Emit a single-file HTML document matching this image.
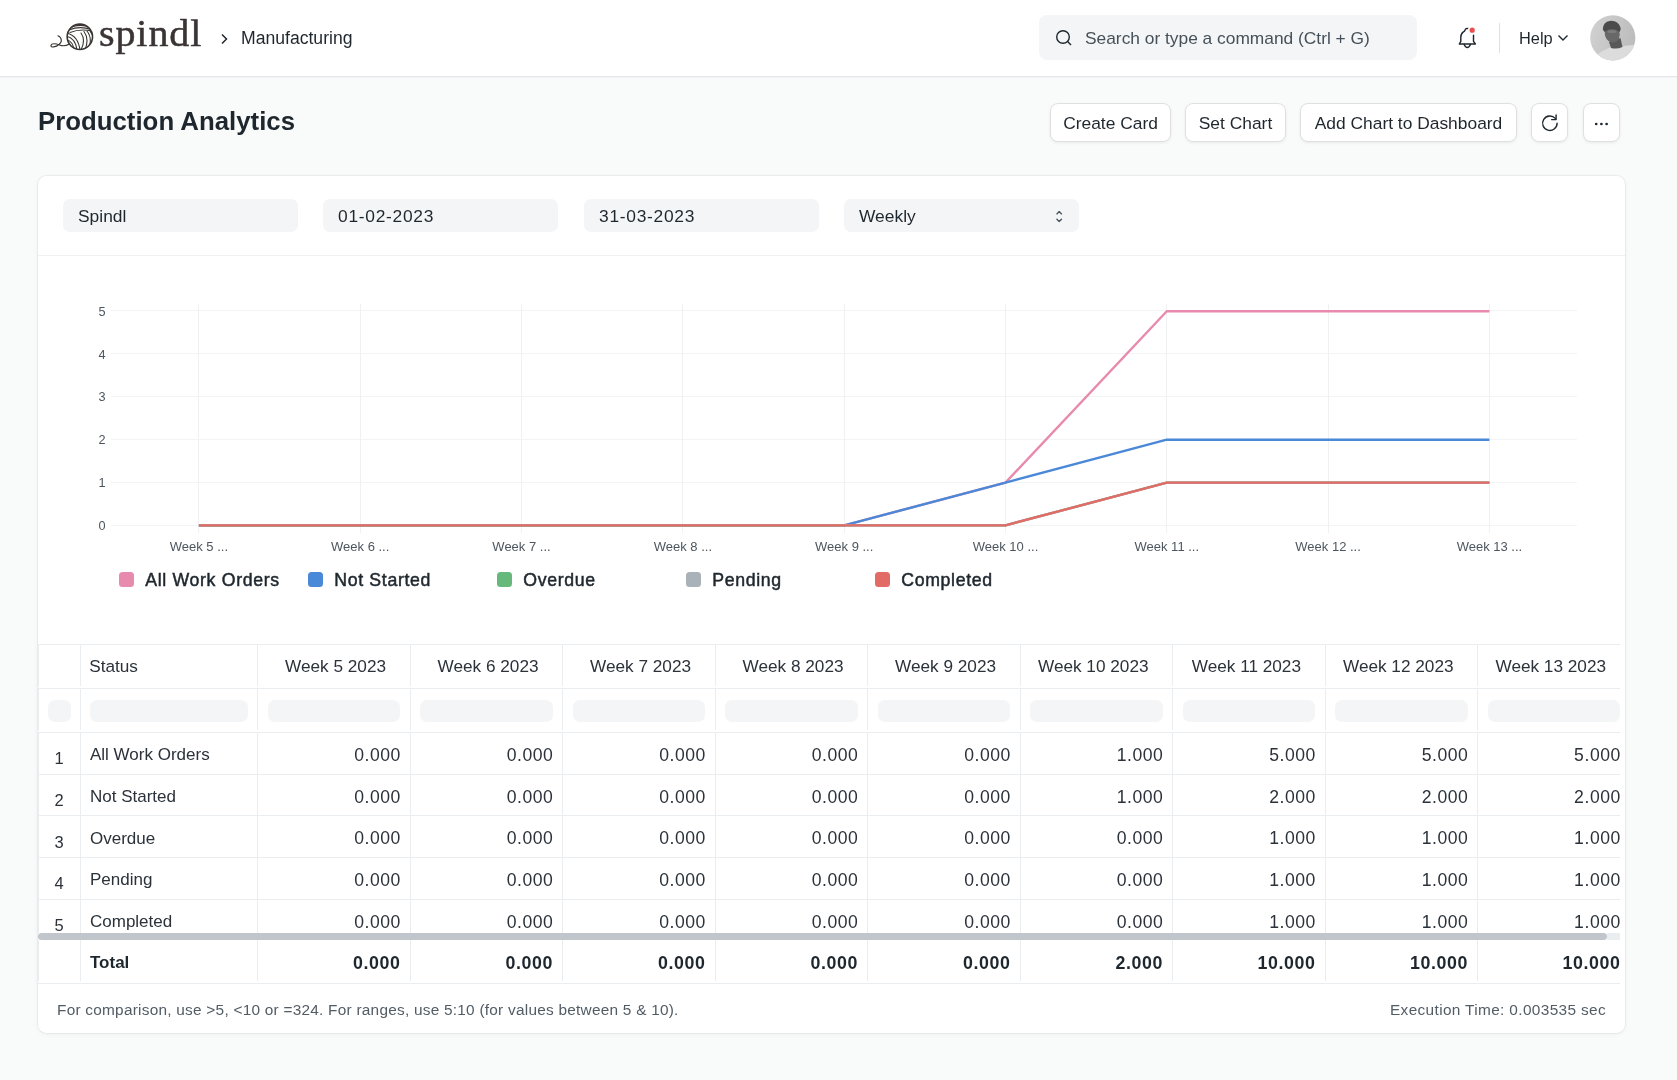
<!DOCTYPE html>
<html><head><meta charset="utf-8">
<style>
*{box-sizing:border-box;margin:0;padding:0}
html,body{width:1677px;height:1080px;overflow:hidden}
body{will-change:transform}
body{background:#f9fafa;font-family:"Liberation Sans",sans-serif;color:#1f272e;position:relative}
.abs{position:absolute}
#nav{left:0;top:0;width:1677px;height:77px;background:#fff;border-bottom:1px solid #e5e7ea;box-shadow:0 1px 0 #f2f3f5}
.t{position:absolute;white-space:nowrap;line-height:1}
.btn{position:absolute;top:103px;height:39px;background:#fff;border:1px solid #e0e0e0;border-radius:8px;box-shadow:0 1px 3px rgba(0,0,0,.07);font-size:17.4px;color:#1f272e}
.btn span{position:absolute;left:0;right:0;text-align:center;top:11px;line-height:1}
#card{left:38px;top:176px;width:1587px;height:857px;background:#fff;border-radius:8.5px;box-shadow:0 0 0 1px rgba(30,40,50,.055),0 1px 5px rgba(0,0,0,.05)}
.inp{position:absolute;top:199px;width:235px;height:33px;background:#f4f5f6;border-radius:7px;font-size:17.4px;color:#1f272e}
.inp span{position:absolute;left:15px;top:9px;line-height:1}
.leg{font-size:17.7px;color:#1f272e;-webkit-text-stroke:.5px #1f272e;letter-spacing:.68px}
.hb{height:1px;background:#ebeef0}
.vb{width:1px;background:#ebeef0}
.th{font-size:17.2px;color:#2b323a}
.pill{height:22.5px;background:#f4f5f6;border-radius:7px}
.td{font-size:17px;color:#2b323a}
.num{letter-spacing:.55px;font-size:17.6px}
.idx{font-size:16.5px;color:#2b323a}
.tot{font-size:17px;font-weight:bold;color:#1f272e}
.tot.num{font-size:17.8px;letter-spacing:.6px}
.foot{font-size:15.4px;letter-spacing:.24px;color:#525c65}
</style></head>
<body>
<div id="nav" class="abs">
  <!-- logo -->
  <svg class="abs" style="left:48px;top:18px" width="50" height="36" viewBox="48 18 50 36">
    <defs><clipPath id="ballc"><circle cx="79.85" cy="36.8" r="12.6"/></clipPath></defs>
    <g fill="none" stroke="#3b3434" stroke-linecap="round">
      <circle cx="79.85" cy="36.8" r="12.7" stroke-width="1.6"/>
      <g clip-path="url(#ballc)" stroke-width="1.1">
        <path d="M70 27.5 Q80 23.5 90 27"/>
        <path d="M69 30 Q80 25.5 91 29.5"/>
        <path d="M70 32.5 Q80 28.5 92 31"/>
        <path d="M81 33 Q86 40 81 50"/>
        <path d="M84 31.5 Q89.5 39 85 50"/>
        <path d="M87 31 Q92.5 38 89 48"/>
        <path d="M90 31 Q95 37 92 45"/>
        <path d="M66 33 Q78 35 80 50"/>
        <path d="M66 36 Q75.5 38 77 50"/>
        <path d="M66 39.5 Q73 41 74 50"/>
        <path d="M66 43 Q70.5 44.5 71 50"/>
      </g>
      <path d="M58 35.7 C62 37.5 62.5 42 59 44.5 C56 47 50.5 48 51 45.5 C51.5 43 56 43.5 59.5 45 C62 46 66 46 69 44.3" stroke-width="1.1"/>
    </g>
  </svg>
  <div class="t" style="left:99px;top:15px;font-family:'Liberation Serif',serif;font-size:40px;letter-spacing:.9px;color:#3b3434;-webkit-text-stroke:.5px #3b3434;transform:scaleY(.93);transform-origin:0 0">spindl</div>
  <svg class="abs" style="left:219px;top:33px" width="10" height="12" viewBox="0 0 10 12"><path d="M3 1.5 L7.5 6 L3 10.5" fill="none" stroke="#1f272e" stroke-width="1.5"/></svg>
  <div class="t" style="left:241px;top:30px;font-size:17.6px;color:#1f272e">Manufacturing</div>
  <!-- search -->
  <div class="abs" style="left:1039px;top:15px;width:378px;height:45px;background:#f4f5f6;border-radius:8px"></div>
  <svg class="abs" style="left:1055px;top:29px" width="18" height="18" viewBox="0 0 18 18"><circle cx="8" cy="8" r="6.3" fill="none" stroke="#1f272e" stroke-width="1.4"/><path d="M12.6 12.6 L16 16" stroke="#1f272e" stroke-width="1.4"/></svg>
  <div class="t" style="left:1085px;top:30px;font-size:17.35px;color:#465059">Search or type a command (Ctrl + G)</div>
  <!-- bell -->
  <svg class="abs" style="left:1452px;top:22px" width="30" height="30" viewBox="1452 22 30 30">
    <g fill="none" stroke="#1f272e" stroke-width="1.45" stroke-linecap="round" stroke-linejoin="round">
      <path d="M1467.6 28.4 L1466.9 28.4 Q1465.6 28.5 1465.1 29.9 Q1464.6 31.3 1463.4 31.8 Q1460.9 33.4 1460.8 37.2 L1460.8 41.4 L1459.3 44 L1475.4 44 L1473.5 41.4 L1473.5 35.2"/>
      <path d="M1464.2 44.4 Q1465.4 47.4 1467.3 47.4 Q1469.2 47.4 1470.4 44.4"/>
    </g>
    <circle cx="1472.2" cy="30.2" r="2.6" fill="#e8524e"/>
  </svg>
  <div class="abs" style="left:1499px;top:23px;width:1px;height:30px;background:#dce0e3"></div>
  <div class="t" style="left:1519px;top:30px;font-size:16.4px;color:#1f272e">Help</div>
  <svg class="abs" style="left:1557px;top:33px" width="12" height="9" viewBox="0 0 12 9"><path d="M1.5 2.5 L6 7 L10.5 2.5" fill="none" stroke="#1f272e" stroke-width="1.4"/></svg>
  <!-- avatar -->
  <svg class="abs" style="left:1590px;top:15px" width="46" height="46" viewBox="0 0 46 46">
    <defs>
      <clipPath id="avc"><circle cx="22.8" cy="22.8" r="22.6"/></clipPath>
      <linearGradient id="avg" x1="0" y1="0" x2="1" y2="0.3"><stop offset="0" stop-color="#d2d2d2"/><stop offset="1" stop-color="#bdbdbd"/></linearGradient>
      <filter id="avb" x="-10%" y="-10%" width="120%" height="120%"><feGaussianBlur stdDeviation="0.6"/></filter>
    </defs>
    <g clip-path="url(#avc)">
      <rect width="46" height="46" fill="url(#avg)"/>
      <g filter="url(#avb)">
        <path d="M5 41 Q12 35.5 20 32.5 L27 33 Q36 29.5 46 30 L48 48 L4 48 Z" fill="#dcdcdc"/>
        <path d="M19 27 L30.5 23 L32.5 32 Q27 34.5 21 33 Z" fill="#595959"/>
        <ellipse cx="22.3" cy="19" rx="7.4" ry="8.6" transform="rotate(-15 22.3 19)" fill="#676767"/>
        <path d="M12.8 14.5 Q13 6.5 21 5.8 Q29 6 30.8 13.5 L29.8 17 Q22 11 14.5 17 Z" fill="#4b4b4b"/>
        <ellipse cx="22" cy="16.5" rx="4.5" ry="1.6" fill="#8c8c8c" opacity=".55"/>
      </g>
    </g>
  </svg>
</div>

<div class="t" style="left:38px;top:108.5px;font-size:25.8px;font-weight:bold;color:#1f272e">Production Analytics</div>
<div class="btn" style="left:1050px;width:121px"><span>Create Card</span></div>
<div class="btn" style="left:1185px;width:101px"><span>Set Chart</span></div>
<div class="btn" style="left:1300px;width:217px"><span>Add Chart to Dashboard</span></div>
<div class="btn" style="left:1531px;width:37px"></div>
<svg class="abs" style="left:1540px;top:113px" width="20" height="20" viewBox="1540 113 20 20"><path d="M1557.1 123.2 A7.25 7.25 0 1 1 1555.3 118.4" fill="none" stroke="#1f272e" stroke-width="1.4" stroke-linecap="round"/><path d="M1551.6 119.6 L1556.1 119.6 L1556.1 115" fill="none" stroke="#1f272e" stroke-width="1.4" stroke-linecap="round" stroke-linejoin="round"/></svg>
<div class="btn" style="left:1583px;width:37px"></div>
<svg class="abs" style="left:1590px;top:118px" width="24" height="12" viewBox="1590 118 24 12"><circle cx="1596.2" cy="124" r="1.35" fill="#1f272e"/><circle cx="1601.4" cy="124" r="1.35" fill="#1f272e"/><circle cx="1606.6" cy="124" r="1.35" fill="#1f272e"/></svg>

<div id="card" class="abs"></div>
<div class="inp" style="left:63px"><span>Spindl</span></div>
<div class="inp" style="left:323px"><span style="letter-spacing:.72px">01-02-2023</span></div>
<div class="inp" style="left:584px"><span style="letter-spacing:.72px">31-03-2023</span></div>
<div class="inp" style="left:844px"><span>Weekly</span></div>
<svg class="abs" style="left:1054px;top:209px" width="10" height="16" viewBox="1054 209 10 16"><path d="M1056.9 213.9 L1059.2 211.6 L1061.5 213.9 M1056.9 219.3 L1059.2 221.6 L1061.5 219.3" fill="none" stroke="#4a545e" stroke-width="1.35" stroke-linecap="round" stroke-linejoin="round"/></svg>
<div class="abs" style="left:38px;top:255px;width:1587px;height:1px;background:#eef0f2"></div>

<!--CHART-->
<svg class="abs" style="left:0;top:0" width="1677" height="620" viewBox="0 0 1677 620">
<g stroke="#f0f1f3" stroke-width="1" shape-rendering="crispEdges">
<line x1="111" y1="525.00" x2="1577" y2="525.00" stroke="#f3f4f5"/>
<line x1="111" y1="482.17" x2="1577" y2="482.17" stroke="#f3f4f5"/>
<line x1="111" y1="439.34" x2="1577" y2="439.34" stroke="#f3f4f5"/>
<line x1="111" y1="396.51" x2="1577" y2="396.51" stroke="#f3f4f5"/>
<line x1="111" y1="353.68" x2="1577" y2="353.68" stroke="#f3f4f5"/>
<line x1="111" y1="310.85" x2="1577" y2="310.85" stroke="#f3f4f5"/>
<line x1="198.95" y1="304" x2="198.95" y2="533"/>
<line x1="360.25" y1="304" x2="360.25" y2="533"/>
<line x1="521.55" y1="304" x2="521.55" y2="533"/>
<line x1="682.85" y1="304" x2="682.85" y2="533"/>
<line x1="844.15" y1="304" x2="844.15" y2="533"/>
<line x1="1005.45" y1="304" x2="1005.45" y2="533"/>
<line x1="1166.75" y1="304" x2="1166.75" y2="533"/>
<line x1="1328.05" y1="304" x2="1328.05" y2="533"/>
<line x1="1489.35" y1="304" x2="1489.35" y2="533"/>
</g>
<g font-family="Liberation Sans" font-size="12.7" fill="#4d565f" text-anchor="end">
<text x="105.5" y="529.9">0</text>
<text x="105.5" y="487.1">1</text>
<text x="105.5" y="444.2">2</text>
<text x="105.5" y="401.4">3</text>
<text x="105.5" y="358.6">4</text>
<text x="105.5" y="315.8">5</text>
</g>
<g font-family="Liberation Sans" font-size="13" fill="#4d565f" text-anchor="middle">
<text x="198.9" y="550.6">Week 5 ...</text>
<text x="360.2" y="550.6">Week 6 ...</text>
<text x="521.5" y="550.6">Week 7 ...</text>
<text x="682.9" y="550.6">Week 8 ...</text>
<text x="844.2" y="550.6">Week 9 ...</text>
<text x="1005.5" y="550.6">Week 10 ...</text>
<text x="1166.8" y="550.6">Week 11 ...</text>
<text x="1328.1" y="550.6">Week 12 ...</text>
<text x="1489.4" y="550.6">Week 13 ...</text>
</g>
<polyline points="198.9,525.4 360.2,525.4 521.5,525.4 682.9,525.4 844.2,525.4 1005.5,482.6 1166.8,311.2 1328.1,311.2 1489.4,311.2" fill="none" stroke="#e88aad" stroke-width="2.4" stroke-linejoin="round"/>
<polyline points="198.9,525.4 360.2,525.4 521.5,525.4 682.9,525.4 844.2,525.4 1005.5,482.6 1166.8,439.7 1328.1,439.7 1489.4,439.7" fill="none" stroke="#4a88d8" stroke-width="2.4" stroke-linejoin="round"/>
<polyline points="198.9,525.4 360.2,525.4 521.5,525.4 682.9,525.4 844.2,525.4 1005.5,525.4 1166.8,482.6 1328.1,482.6 1489.4,482.6" fill="none" stroke="#66b97b" stroke-width="2.4" stroke-linejoin="round"/>
<polyline points="198.9,525.4 360.2,525.4 521.5,525.4 682.9,525.4 844.2,525.4 1005.5,525.4 1166.8,482.6 1328.1,482.6 1489.4,482.6" fill="none" stroke="#a9b1b9" stroke-width="2.4" stroke-linejoin="round"/>
<polyline points="198.9,525.4 360.2,525.4 521.5,525.4 682.9,525.4 844.2,525.4 1005.5,525.4 1166.8,482.6 1328.1,482.6 1489.4,482.6" fill="none" stroke="#e36b66" stroke-width="2.4" stroke-linejoin="round"/>
</svg>
<div class="abs" style="left:118.6px;top:572px;width:15px;height:15px;border-radius:3.5px;background:#e88aad"></div>
<div class="t leg" style="left:145.2px;top:572px">All Work Orders</div>
<div class="abs" style="left:307.6px;top:572px;width:15px;height:15px;border-radius:3.5px;background:#4a88d8"></div>
<div class="t leg" style="left:334.2px;top:572px">Not Started</div>
<div class="abs" style="left:496.6px;top:572px;width:15px;height:15px;border-radius:3.5px;background:#66b97b"></div>
<div class="t leg" style="left:523.2px;top:572px">Overdue</div>
<div class="abs" style="left:685.6px;top:572px;width:15px;height:15px;border-radius:3.5px;background:#a9b1b9"></div>
<div class="t leg" style="left:712.2px;top:572px">Pending</div>
<div class="abs" style="left:874.6px;top:572px;width:15px;height:15px;border-radius:3.5px;background:#e36b66"></div>
<div class="t leg" style="left:901.2px;top:572px">Completed</div>
<!--/CHART-->
<!--TABLE-->
<div class="abs" style="left:38px;top:644px;width:1581.5px;height:340px;overflow:hidden">
<div class="abs hb" style="left:0;top:0.0px;width:1600px"></div>
<div class="abs hb" style="left:0;top:43.8px;width:1600px"></div>
<div class="abs hb" style="left:0;top:88.0px;width:1600px"></div>
<div class="abs hb" style="left:0;top:129.7px;width:1600px"></div>
<div class="abs hb" style="left:0;top:171.4px;width:1600px"></div>
<div class="abs hb" style="left:0;top:213.1px;width:1600px"></div>
<div class="abs hb" style="left:0;top:254.8px;width:1600px"></div>
<div class="abs hb" style="left:0;top:338.8px;width:1600px"></div>
<div class="abs vb" style="left:0.0px;top:0.5px;height:41.0px"></div>
<div class="abs vb" style="left:41.5px;top:0.5px;height:41.0px"></div>
<div class="abs vb" style="left:219.0px;top:0.5px;height:41.0px"></div>
<div class="abs vb" style="left:371.5px;top:0.5px;height:41.0px"></div>
<div class="abs vb" style="left:524.0px;top:0.5px;height:41.0px"></div>
<div class="abs vb" style="left:676.5px;top:0.5px;height:41.0px"></div>
<div class="abs vb" style="left:829.0px;top:0.5px;height:41.0px"></div>
<div class="abs vb" style="left:981.5px;top:0.5px;height:41.0px"></div>
<div class="abs vb" style="left:1134.0px;top:0.5px;height:41.0px"></div>
<div class="abs vb" style="left:1286.5px;top:0.5px;height:41.0px"></div>
<div class="abs vb" style="left:1439.0px;top:0.5px;height:41.0px"></div>
<div class="abs vb" style="left:1591.5px;top:0.5px;height:41.0px"></div>
<div class="abs vb" style="left:0.0px;top:44.5px;height:41.0px"></div>
<div class="abs vb" style="left:41.5px;top:44.5px;height:41.0px"></div>
<div class="abs vb" style="left:219.0px;top:44.5px;height:41.0px"></div>
<div class="abs vb" style="left:371.5px;top:44.5px;height:41.0px"></div>
<div class="abs vb" style="left:524.0px;top:44.5px;height:41.0px"></div>
<div class="abs vb" style="left:676.5px;top:44.5px;height:41.0px"></div>
<div class="abs vb" style="left:829.0px;top:44.5px;height:41.0px"></div>
<div class="abs vb" style="left:981.5px;top:44.5px;height:41.0px"></div>
<div class="abs vb" style="left:1134.0px;top:44.5px;height:41.0px"></div>
<div class="abs vb" style="left:1286.5px;top:44.5px;height:41.0px"></div>
<div class="abs vb" style="left:1439.0px;top:44.5px;height:41.0px"></div>
<div class="abs vb" style="left:1591.5px;top:44.5px;height:41.0px"></div>
<div class="abs vb" style="left:0.0px;top:88.5px;height:41.7px"></div>
<div class="abs vb" style="left:41.5px;top:88.5px;height:41.7px"></div>
<div class="abs vb" style="left:219.0px;top:88.5px;height:41.7px"></div>
<div class="abs vb" style="left:371.5px;top:88.5px;height:41.7px"></div>
<div class="abs vb" style="left:524.0px;top:88.5px;height:41.7px"></div>
<div class="abs vb" style="left:676.5px;top:88.5px;height:41.7px"></div>
<div class="abs vb" style="left:829.0px;top:88.5px;height:41.7px"></div>
<div class="abs vb" style="left:981.5px;top:88.5px;height:41.7px"></div>
<div class="abs vb" style="left:1134.0px;top:88.5px;height:41.7px"></div>
<div class="abs vb" style="left:1286.5px;top:88.5px;height:41.7px"></div>
<div class="abs vb" style="left:1439.0px;top:88.5px;height:41.7px"></div>
<div class="abs vb" style="left:1591.5px;top:88.5px;height:41.7px"></div>
<div class="abs vb" style="left:0.0px;top:130.2px;height:41.7px"></div>
<div class="abs vb" style="left:41.5px;top:130.2px;height:41.7px"></div>
<div class="abs vb" style="left:219.0px;top:130.2px;height:41.7px"></div>
<div class="abs vb" style="left:371.5px;top:130.2px;height:41.7px"></div>
<div class="abs vb" style="left:524.0px;top:130.2px;height:41.7px"></div>
<div class="abs vb" style="left:676.5px;top:130.2px;height:41.7px"></div>
<div class="abs vb" style="left:829.0px;top:130.2px;height:41.7px"></div>
<div class="abs vb" style="left:981.5px;top:130.2px;height:41.7px"></div>
<div class="abs vb" style="left:1134.0px;top:130.2px;height:41.7px"></div>
<div class="abs vb" style="left:1286.5px;top:130.2px;height:41.7px"></div>
<div class="abs vb" style="left:1439.0px;top:130.2px;height:41.7px"></div>
<div class="abs vb" style="left:1591.5px;top:130.2px;height:41.7px"></div>
<div class="abs vb" style="left:0.0px;top:171.9px;height:41.7px"></div>
<div class="abs vb" style="left:41.5px;top:171.9px;height:41.7px"></div>
<div class="abs vb" style="left:219.0px;top:171.9px;height:41.7px"></div>
<div class="abs vb" style="left:371.5px;top:171.9px;height:41.7px"></div>
<div class="abs vb" style="left:524.0px;top:171.9px;height:41.7px"></div>
<div class="abs vb" style="left:676.5px;top:171.9px;height:41.7px"></div>
<div class="abs vb" style="left:829.0px;top:171.9px;height:41.7px"></div>
<div class="abs vb" style="left:981.5px;top:171.9px;height:41.7px"></div>
<div class="abs vb" style="left:1134.0px;top:171.9px;height:41.7px"></div>
<div class="abs vb" style="left:1286.5px;top:171.9px;height:41.7px"></div>
<div class="abs vb" style="left:1439.0px;top:171.9px;height:41.7px"></div>
<div class="abs vb" style="left:1591.5px;top:171.9px;height:41.7px"></div>
<div class="abs vb" style="left:0.0px;top:213.6px;height:41.7px"></div>
<div class="abs vb" style="left:41.5px;top:213.6px;height:41.7px"></div>
<div class="abs vb" style="left:219.0px;top:213.6px;height:41.7px"></div>
<div class="abs vb" style="left:371.5px;top:213.6px;height:41.7px"></div>
<div class="abs vb" style="left:524.0px;top:213.6px;height:41.7px"></div>
<div class="abs vb" style="left:676.5px;top:213.6px;height:41.7px"></div>
<div class="abs vb" style="left:829.0px;top:213.6px;height:41.7px"></div>
<div class="abs vb" style="left:981.5px;top:213.6px;height:41.7px"></div>
<div class="abs vb" style="left:1134.0px;top:213.6px;height:41.7px"></div>
<div class="abs vb" style="left:1286.5px;top:213.6px;height:41.7px"></div>
<div class="abs vb" style="left:1439.0px;top:213.6px;height:41.7px"></div>
<div class="abs vb" style="left:1591.5px;top:213.6px;height:41.7px"></div>
<div class="abs vb" style="left:0.0px;top:255.3px;height:33.7px"></div>
<div class="abs vb" style="left:41.5px;top:255.3px;height:33.7px"></div>
<div class="abs vb" style="left:219.0px;top:255.3px;height:33.7px"></div>
<div class="abs vb" style="left:371.5px;top:255.3px;height:33.7px"></div>
<div class="abs vb" style="left:524.0px;top:255.3px;height:33.7px"></div>
<div class="abs vb" style="left:676.5px;top:255.3px;height:33.7px"></div>
<div class="abs vb" style="left:829.0px;top:255.3px;height:33.7px"></div>
<div class="abs vb" style="left:981.5px;top:255.3px;height:33.7px"></div>
<div class="abs vb" style="left:1134.0px;top:255.3px;height:33.7px"></div>
<div class="abs vb" style="left:1286.5px;top:255.3px;height:33.7px"></div>
<div class="abs vb" style="left:1439.0px;top:255.3px;height:33.7px"></div>
<div class="abs vb" style="left:1591.5px;top:255.3px;height:33.7px"></div>
<div class="abs vb" style="left:0.0px;top:296.0px;height:41.0px"></div>
<div class="abs vb" style="left:41.5px;top:296.0px;height:41.0px"></div>
<div class="abs vb" style="left:219.0px;top:296.0px;height:41.0px"></div>
<div class="abs vb" style="left:371.5px;top:296.0px;height:41.0px"></div>
<div class="abs vb" style="left:524.0px;top:296.0px;height:41.0px"></div>
<div class="abs vb" style="left:676.5px;top:296.0px;height:41.0px"></div>
<div class="abs vb" style="left:829.0px;top:296.0px;height:41.0px"></div>
<div class="abs vb" style="left:981.5px;top:296.0px;height:41.0px"></div>
<div class="abs vb" style="left:1134.0px;top:296.0px;height:41.0px"></div>
<div class="abs vb" style="left:1286.5px;top:296.0px;height:41.0px"></div>
<div class="abs vb" style="left:1439.0px;top:296.0px;height:41.0px"></div>
<div class="abs vb" style="left:1591.5px;top:296.0px;height:41.0px"></div>
<div class="t th" style="left:51.2px;top:13.7px">Status</div>
<div class="t th" style="right:1233.5px;top:13.7px">Week 5 2023</div>
<div class="t th" style="right:1081.0px;top:13.7px">Week 6 2023</div>
<div class="t th" style="right:928.5px;top:13.7px">Week 7 2023</div>
<div class="t th" style="right:776.0px;top:13.7px">Week 8 2023</div>
<div class="t th" style="right:623.5px;top:13.7px">Week 9 2023</div>
<div class="t th" style="right:471.0px;top:13.7px">Week 10 2023</div>
<div class="t th" style="right:318.5px;top:13.7px">Week 11 2023</div>
<div class="t th" style="right:166.0px;top:13.7px">Week 12 2023</div>
<div class="t th" style="right:13.5px;top:13.7px">Week 13 2023</div>
<div class="abs pill" style="left:10.0px;top:55.5px;width:22.5px"></div>
<div class="abs pill" style="left:52.0px;top:55.5px;width:157.5px"></div>
<div class="abs pill" style="left:229.5px;top:55.5px;width:132.5px"></div>
<div class="abs pill" style="left:382.0px;top:55.5px;width:132.5px"></div>
<div class="abs pill" style="left:534.5px;top:55.5px;width:132.5px"></div>
<div class="abs pill" style="left:687.0px;top:55.5px;width:132.5px"></div>
<div class="abs pill" style="left:839.5px;top:55.5px;width:132.5px"></div>
<div class="abs pill" style="left:992.0px;top:55.5px;width:132.5px"></div>
<div class="abs pill" style="left:1144.5px;top:55.5px;width:132.5px"></div>
<div class="abs pill" style="left:1297.0px;top:55.5px;width:132.5px"></div>
<div class="abs pill" style="left:1449.5px;top:55.5px;width:132.5px"></div>
<div class="abs pill" style="left:1602.0px;top:55.5px;width:132.5px"></div>
<div class="t idx" style="left:0;width:42px;text-align:center;top:106.3px">1</div>
<div class="t td" style="left:52.0px;top:102.3px">All Work Orders</div>
<div class="t td num" style="right:1218.6px;top:103.0px">0.000</div>
<div class="t td num" style="right:1066.1px;top:103.0px">0.000</div>
<div class="t td num" style="right:913.6px;top:103.0px">0.000</div>
<div class="t td num" style="right:761.1px;top:103.0px">0.000</div>
<div class="t td num" style="right:608.6px;top:103.0px">0.000</div>
<div class="t td num" style="right:456.1px;top:103.0px">1.000</div>
<div class="t td num" style="right:303.6px;top:103.0px">5.000</div>
<div class="t td num" style="right:151.1px;top:103.0px">5.000</div>
<div class="t td num" style="right:-1.4px;top:103.0px">5.000</div>
<div class="t idx" style="left:0;width:42px;text-align:center;top:148.0px">2</div>
<div class="t td" style="left:52.0px;top:144.0px">Not Started</div>
<div class="t td num" style="right:1218.6px;top:144.7px">0.000</div>
<div class="t td num" style="right:1066.1px;top:144.7px">0.000</div>
<div class="t td num" style="right:913.6px;top:144.7px">0.000</div>
<div class="t td num" style="right:761.1px;top:144.7px">0.000</div>
<div class="t td num" style="right:608.6px;top:144.7px">0.000</div>
<div class="t td num" style="right:456.1px;top:144.7px">1.000</div>
<div class="t td num" style="right:303.6px;top:144.7px">2.000</div>
<div class="t td num" style="right:151.1px;top:144.7px">2.000</div>
<div class="t td num" style="right:-1.4px;top:144.7px">2.000</div>
<div class="t idx" style="left:0;width:42px;text-align:center;top:189.7px">3</div>
<div class="t td" style="left:52.0px;top:185.7px">Overdue</div>
<div class="t td num" style="right:1218.6px;top:186.4px">0.000</div>
<div class="t td num" style="right:1066.1px;top:186.4px">0.000</div>
<div class="t td num" style="right:913.6px;top:186.4px">0.000</div>
<div class="t td num" style="right:761.1px;top:186.4px">0.000</div>
<div class="t td num" style="right:608.6px;top:186.4px">0.000</div>
<div class="t td num" style="right:456.1px;top:186.4px">0.000</div>
<div class="t td num" style="right:303.6px;top:186.4px">1.000</div>
<div class="t td num" style="right:151.1px;top:186.4px">1.000</div>
<div class="t td num" style="right:-1.4px;top:186.4px">1.000</div>
<div class="t idx" style="left:0;width:42px;text-align:center;top:231.4px">4</div>
<div class="t td" style="left:52.0px;top:227.4px">Pending</div>
<div class="t td num" style="right:1218.6px;top:228.1px">0.000</div>
<div class="t td num" style="right:1066.1px;top:228.1px">0.000</div>
<div class="t td num" style="right:913.6px;top:228.1px">0.000</div>
<div class="t td num" style="right:761.1px;top:228.1px">0.000</div>
<div class="t td num" style="right:608.6px;top:228.1px">0.000</div>
<div class="t td num" style="right:456.1px;top:228.1px">0.000</div>
<div class="t td num" style="right:303.6px;top:228.1px">1.000</div>
<div class="t td num" style="right:151.1px;top:228.1px">1.000</div>
<div class="t td num" style="right:-1.4px;top:228.1px">1.000</div>
<div class="t idx" style="left:0;width:42px;text-align:center;top:273.1px">5</div>
<div class="t td" style="left:52.0px;top:269.1px">Completed</div>
<div class="t td num" style="right:1218.6px;top:269.8px">0.000</div>
<div class="t td num" style="right:1066.1px;top:269.8px">0.000</div>
<div class="t td num" style="right:913.6px;top:269.8px">0.000</div>
<div class="t td num" style="right:761.1px;top:269.8px">0.000</div>
<div class="t td num" style="right:608.6px;top:269.8px">0.000</div>
<div class="t td num" style="right:456.1px;top:269.8px">0.000</div>
<div class="t td num" style="right:303.6px;top:269.8px">1.000</div>
<div class="t td num" style="right:151.1px;top:269.8px">1.000</div>
<div class="t td num" style="right:-1.4px;top:269.8px">1.000</div>
<div class="abs" style="left:0;top:289.2px;width:1569px;height:6.6px;border-radius:4px;background:#c0c6cc"></div>
<div class="abs" style="left:1569px;top:289.2px;width:20px;height:6.6px;background:#ebeef0"></div>
<div class="t tot" style="left:52.0px;top:310.4px">Total</div>
<div class="t tot num" style="right:1219.0px;top:311.1px">0.000</div>
<div class="t tot num" style="right:1066.5px;top:311.1px">0.000</div>
<div class="t tot num" style="right:914.0px;top:311.1px">0.000</div>
<div class="t tot num" style="right:761.5px;top:311.1px">0.000</div>
<div class="t tot num" style="right:609.0px;top:311.1px">0.000</div>
<div class="t tot num" style="right:456.5px;top:311.1px">2.000</div>
<div class="t tot num" style="right:304.0px;top:311.1px">10.000</div>
<div class="t tot num" style="right:151.5px;top:311.1px">10.000</div>
<div class="t tot num" style="right:-1.0px;top:311.1px">10.000</div>
</div>
<div class="t foot" style="left:57px;top:1002px">For comparison, use &gt;5, &lt;10 or =324. For ranges, use 5:10 (for values between 5 &amp; 10).</div>
<div class="t foot" style="right:71px;top:1002px;letter-spacing:.35px">Execution Time: 0.003535 sec</div>
<!--/TABLE-->
</body></html>
